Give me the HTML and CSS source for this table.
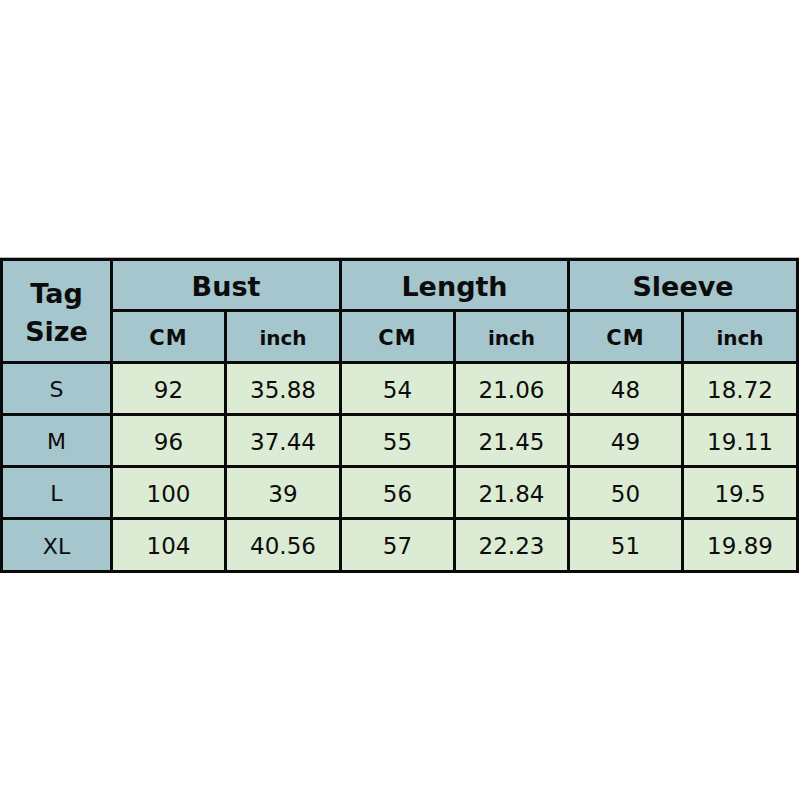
FILE: index.html
```html
<!DOCTYPE html>
<html>
<head>
<meta charset="utf-8">
<link rel="stylesheet" href="styles.css">
</head>
<body>
<div class="page">
  <div class="chart">
    <div class="cell head tag">Tag<br>Size</div>
    <div class="cell head group">Bust</div>
    <div class="cell head group">Length</div>
    <div class="cell head group">Sleeve</div>
    <div class="cell head unit cm">CM</div>
    <div class="cell head unit">inch</div>
    <div class="cell head unit cm">CM</div>
    <div class="cell head unit">inch</div>
    <div class="cell head unit cm">CM</div>
    <div class="cell head unit">inch</div>

    <div class="cell size">S</div>
    <div class="cell val">92</div><div class="cell val">35.88</div>
    <div class="cell val">54</div><div class="cell val">21.06</div>
    <div class="cell val">48</div><div class="cell val">18.72</div>

    <div class="cell size">M</div>
    <div class="cell val">96</div><div class="cell val">37.44</div>
    <div class="cell val">55</div><div class="cell val">21.45</div>
    <div class="cell val">49</div><div class="cell val">19.11</div>

    <div class="cell size">L</div>
    <div class="cell val">100</div><div class="cell val">39</div>
    <div class="cell val">56</div><div class="cell val">21.84</div>
    <div class="cell val">50</div><div class="cell val">19.5</div>

    <div class="cell size">XL</div>
    <div class="cell val">104</div><div class="cell val">40.56</div>
    <div class="cell val">57</div><div class="cell val">22.23</div>
    <div class="cell val">51</div><div class="cell val">19.89</div>
  </div>
</div>
</body>
</html>
```

FILE: styles.css
```css
html, body {
  margin: 0;
  padding: 0;
  background: #ffffff;
}

.page {
  padding-top: 258px;
  width: 800px;
  height: 542px;
}

.chart {
  display: grid;
  grid-template-columns: 107px 111px 112px 111px 111px 111px 112px;
  grid-template-rows: 48px 49px 49px 49px 49px 50px;
  gap: 3px;
  padding: 3px;
  width: 793px;
  background: #0a0a0a;
  box-shadow: 0 -1px 0 #b8b8b8;
  font-family: "DejaVu Sans", "Liberation Sans", sans-serif;
  color: #0c0c0c;
}

.cell {
  display: flex;
  align-items: center;
  justify-content: center;
  text-align: center;
}

.head {
  background: #a5c6cc;
}

.tag {
  grid-row: 1 / 3;
  font-weight: bold;
  font-size: 27px;
  line-height: 38px;
  padding-top: 3px;
}

.group {
  grid-column: span 2;
  font-weight: bold;
  font-size: 27px;
  padding-top: 3px;
}

.unit {
  font-weight: bold;
  font-size: 20px;
  padding-top: 2px;
}

.cm {
  font-size: 21px;
  letter-spacing: 1px;
}

.size {
  background: #a5c6cc;
  font-size: 22px;
  padding-top: 2px;
}

.val {
  background: #dcebd3;
  font-size: 23px;
  padding-top: 2px;
}
```
